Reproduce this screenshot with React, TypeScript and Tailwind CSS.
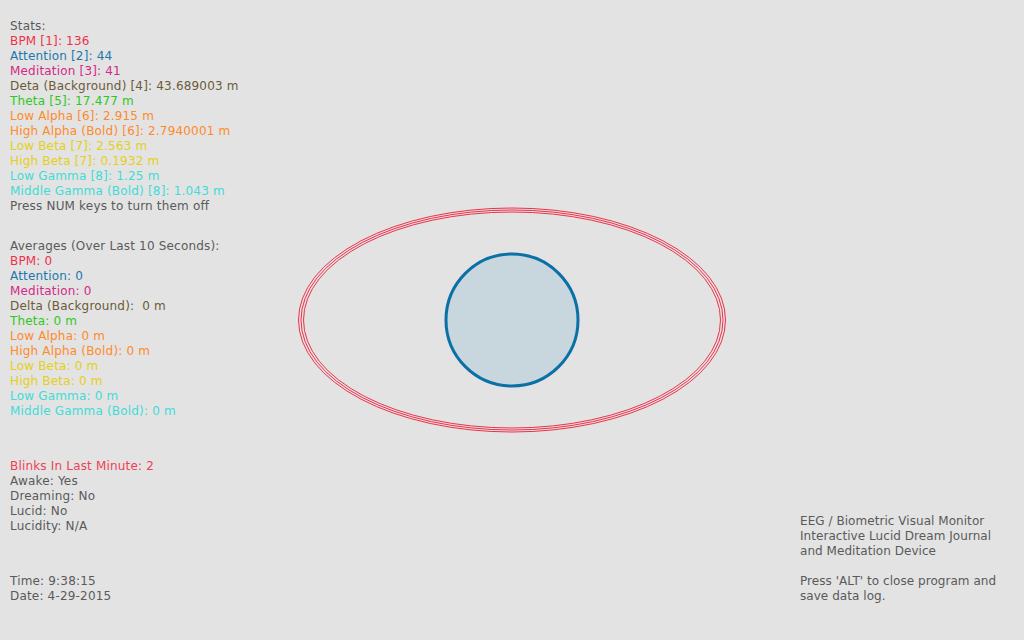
import React from "react";

// Line type
interface StatLine {
    text: string;
    color: string;
}

const RED = "text-[#f0304a]";
const BLUE = "text-[#1a78ae]";
const PINK = "text-[#d42a86]";
const BROWN = "text-[#6b5b37]";
const GREEN = "text-[#2ec822]";
const ORANGE = "text-[#ff8a2a]";
const YELLOW = "text-[#e4d018]";
const CYAN = "text-[#3fdcd6]";
const GREY = "text-[#5a5a5a]";

const stats: StatLine[] = [
    { text: "Stats:", color: GREY },
    { text: "BPM [1]: 136", color: RED },
    { text: "Attention [2]: 44", color: BLUE },
    { text: "Meditation [3]: 41", color: PINK },
    { text: "Deta (Background) [4]: 43.689003 m", color: BROWN },
    { text: "Theta [5]: 17.477 m", color: GREEN },
    { text: "Low Alpha [6]: 2.915 m", color: ORANGE },
    { text: "High Alpha (Bold) [6]: 2.7940001 m", color: ORANGE },
    { text: "Low Beta [7]: 2.563 m", color: YELLOW },
    { text: "High Beta [7]: 0.1932 m", color: YELLOW },
    { text: "Low Gamma [8]: 1.25 m", color: CYAN },
    { text: "Middle Gamma (Bold) [8]: 1.043 m", color: CYAN },
    { text: "Press NUM keys to turn them off", color: GREY },
];

const averages: StatLine[] = [
    { text: "Averages (Over Last 10 Seconds):", color: GREY },
    { text: "BPM: 0", color: RED },
    { text: "Attention: 0", color: BLUE },
    { text: "Meditation: 0", color: PINK },
    { text: "Delta (Background):\u00a0\u00a00 m", color: BROWN },
    { text: "Theta: 0 m", color: GREEN },
    { text: "Low Alpha: 0 m", color: ORANGE },
    { text: "High Alpha (Bold): 0 m", color: ORANGE },
    { text: "Low Beta: 0 m", color: YELLOW },
    { text: "High Beta: 0 m", color: YELLOW },
    { text: "Low Gamma: 0 m", color: CYAN },
    { text: "Middle Gamma (Bold): 0 m", color: CYAN },
];

const state: StatLine[] = [
    { text: "Blinks In Last Minute: 2", color: "text-[#f04055]" },
    { text: "Awake: Yes", color: GREY },
    { text: "Dreaming: No", color: GREY },
    { text: "Lucid: No", color: GREY },
    { text: "Lucidity: N/A", color: GREY },
];

const Block: React.FC<{ lines: StatLine[]; className?: string }> = ({ lines, className }) => (
    <div className={className}>
        {lines.map((l, i) => (
            <div key={i} className={`${l.color} whitespace-nowrap`}>
                {l.text}
            </div>
        ))}
    </div>
);

// Brainwave visualizer drawing
const Visualizer: React.FC = () => (
    <svg width="440" height="240" viewBox="292 200 440 240">
        <ellipse cx="512" cy="320" rx="213.5" ry="112" fill="none" stroke="#f0304a" strokeWidth="1" />
        <ellipse cx="512" cy="320" rx="211" ry="110" fill="none" stroke="#f0304a" strokeWidth="1" />
        <ellipse cx="512" cy="320" rx="208.5" ry="108" fill="none" stroke="#f0304a" strokeWidth="1" />
        <circle cx="512" cy="320" r="66" fill="#c8d7dd" stroke="#0a70a6" strokeWidth="3" />
    </svg>
);

export default function App() {
    return (
        <div
            className="w-[1024px] h-[640px] bg-[#e3e3e3] flex text-[12px] leading-[15px] overflow-hidden"
            style={{ fontFamily: '"DejaVu Sans", Verdana, sans-serif' }}
        >
            <div className="w-[290px] shrink-0 pl-[10px] pt-[18.5px] tracking-[0.18px]">
                <Block lines={stats} />
                <Block lines={averages} className="mt-[25px]" />
                <Block lines={state} className="mt-[40px]" />
                <div className={`${GREY} mt-[40px]`}>
                    <div>Time: 9:38:15</div>
                    <div>Date: 4-29-2015</div>
                </div>
            </div>
            <div className="w-[444px] shrink-0 flex items-center justify-center">
                <Visualizer />
            </div>
            <div className={`flex-1 flex flex-col justify-end pl-[66px] pb-[36.5px] tracking-[0.05px] ${GREY}`}>
                <div>EEG / Biometric Visual Monitor</div>
                <div>Interactive Lucid Dream Journal</div>
                <div>and Meditation Device</div>
                <div className="h-[15px]" />
                <div>Press 'ALT' to close program and</div>
                <div>save data log.</div>
            </div>
        </div>
    );
}
